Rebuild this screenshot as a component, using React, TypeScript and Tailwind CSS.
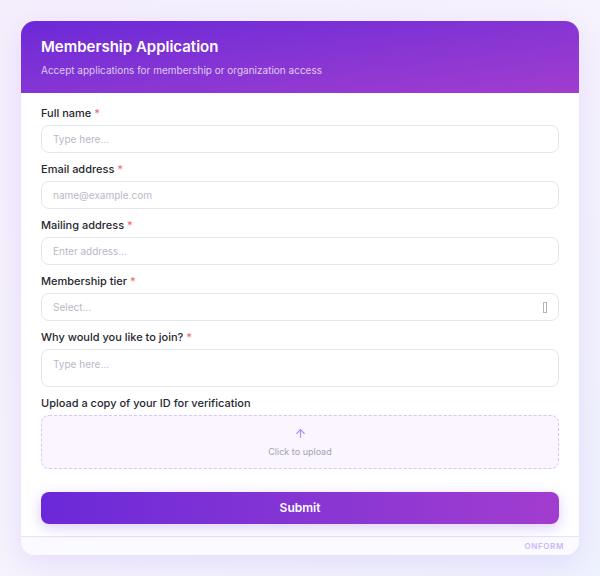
import { ArrowUp } from "lucide-react";

const fields = [
    { label: "Full name", placeholder: "Type here..." },
    { label: "Email address", placeholder: "name@example.com" },
    { label: "Mailing address", placeholder: "Enter address..." },
];

function Label({ text, required = true }: { text: string; required?: boolean }) {
    return (
        <div className="h-4 text-[11px] leading-4 font-medium text-[#27272f]">
            {text}
            {required && <span className="text-[#f26b6b]"> *</span>}
        </div>
    );
}

export default function App() {
    return (
        <div
            className="min-h-[576px] w-[600px] p-[21px] bg-gradient-to-br from-[#f4eefc] via-[#f6f3fd] to-[#eef2fd]"
            style={{ fontFamily: "Inter, 'Noto Sans', sans-serif" }}
        >
            <div className="w-[558px] rounded-[14px] bg-white overflow-hidden shadow-[0_8px_30px_rgba(124,58,237,0.12)]">
                {/* Header */}
                <div className="h-[72px] px-5 pt-4 bg-gradient-to-br from-[#6b28d8] to-[#a13ccf]">
                    <h1 className="text-[15px] leading-5 font-semibold text-white">Membership Application</h1>
                    <p className="mt-[5px] text-[10px] leading-4 text-white/75">
                        Accept applications for membership or organization access
                    </p>
                </div>

                {/* Body */}
                <div className="px-5 pt-3 pb-[12px]">
                    <div className="flex flex-col gap-2">
                        {fields.map((f) => (
                            <div key={f.label} className="flex flex-col gap-1">
                                <Label text={f.label} />
                                <div className="h-7 rounded-lg border-[1.5px] border-[#e4e4ec] pl-[11px] pr-3 flex items-center text-[10px] text-[#b9b9c6]">
                                    {f.placeholder}
                                </div>
                            </div>
                        ))}
                        <div className="flex flex-col gap-1">
                            <Label text="Membership tier" />
                            <div className="h-7 rounded-lg border-[1.5px] border-[#e4e4ec] pl-[11px] pr-[11px] flex items-center justify-between text-[10px] text-[#b9b9c6]">
                                <span>Select...</span>
                                <span className="w-[4px] h-[11px] border border-[#b4b4be]" />
                            </div>
                        </div>
                        <div className="flex flex-col gap-1">
                            <Label text="Why would you like to join?" />
                            <div className="h-[38px] rounded-lg border-[1.5px] border-[#e4e4ec] pl-[11px] pr-3 pt-[6px] text-[10px] leading-4 text-[#b9b9c6]">
                                Type here...
                            </div>
                        </div>
                        <div className="flex flex-col gap-1">
                            <Label text="Upload a copy of your ID for verification" required={false} />
                            <div className="h-[54px] rounded-lg border border-dashed border-[#d6c6fb] bg-[#faf5ff] flex flex-col items-center justify-center gap-[6px]">
                                <ArrowUp size={13} strokeWidth={2} className="text-[#a78bfa]" />
                                <span className="text-[9px] leading-3 text-[#a3a3ad]">Click to upload</span>
                            </div>
                        </div>
                    </div>

                    <button className="mt-[23px] w-full h-8 rounded-lg bg-gradient-to-r from-[#6b28d8] to-[#a23ccf] text-white text-[12px] font-semibold shadow-[0_4px_14px_rgba(139,92,246,0.3)]">
                        Submit
                    </button>
                </div>

                {/* Footer */}
                <div className="h-[19px] border-t border-[#e8e4f0] bg-[#fbfaff] flex items-center justify-end pr-[15px]">
                    <span className="text-[8px] font-semibold tracking-[0.08em] text-[#c9b8fb]">ONFORM</span>
                </div>
            </div>
        </div>
    );
}
